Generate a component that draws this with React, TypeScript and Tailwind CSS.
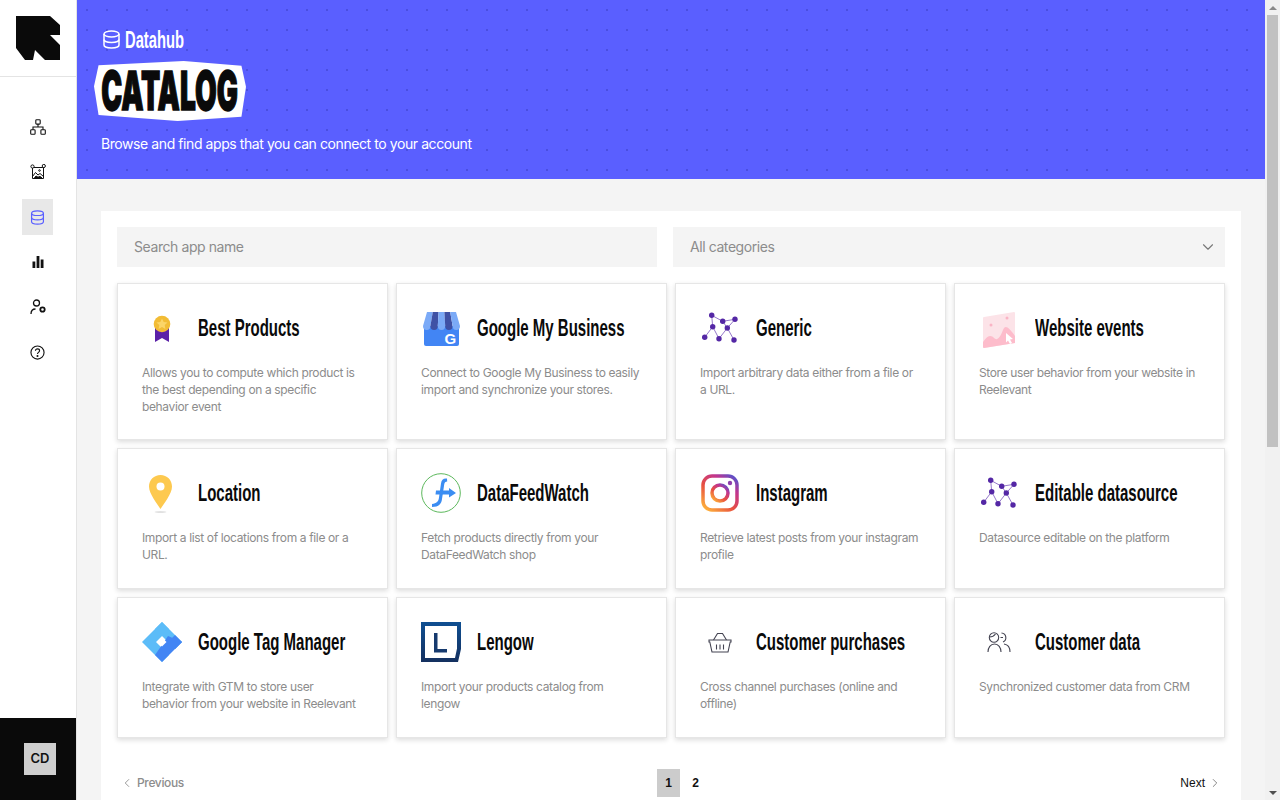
import { ReactNode } from "react";
import { ChevronDown, ChevronLeft, ChevronRight } from "lucide-react";

const body = "font-['Inter','Liberation_Sans',sans-serif]";

function DbIcon({ className }: { className: string }) {
  return (
    <svg viewBox="1.500 0.500 17 19" fill="none" stroke="currentColor" strokeWidth="1.500" className={className}>
      <ellipse cx="10" cy="4.500" rx="7.500" ry="3" />
      <path d="M2.500 4.500v11c0 1.700 3.400 3 7.500 3s7.500-1.300 7.500-3v-11" />
      <path d="M2.500 10c0 1.700 3.400 3 7.500 3s7.500-1.300 7.500-3" />
    </svg>
  );
}

const NavTree = () => (
  <svg viewBox="0 0 16 16" fill="none" stroke="#111" strokeWidth="1.100" className="h-4 w-4">
    <rect x="5.800" y="0.700" width="4.400" height="4.400" rx="0.800" />
    <rect x="0.700" y="10.800" width="4.400" height="4.400" rx="0.800" />
    <rect x="10.900" y="10.800" width="4.400" height="4.400" rx="0.800" />
    <path d="M8 5.100v3M3 10.800V8h10v2.800" />
  </svg>
);

const NavImage = () => (
  <svg viewBox="0 0 16 16" fill="none" stroke="#111" strokeWidth="1" className="h-4 w-4">
    <path d="M2.500 3.500h11v11h-11z" />
    <circle cx="2.500" cy="2.500" r="1.600" fill="#fff" />
    <circle cx="13.800" cy="2" r="1.600" fill="#fff" />
    <circle cx="9.500" cy="6.500" r="0.800" />
    <path d="M2.500 12.500l3-4 2.500 2.500 2-1.500 3.500 3" />
    <path d="M4.500 14l1.500-2 2 1.200 2-.8 2 1.600z" fill="#111" />
  </svg>
);

const NavBars = () => (
  <svg viewBox="0 0 16 16" fill="#111" className="h-4 w-4">
    <rect x="2.500" y="7.500" width="2.800" height="6.500" />
    <rect x="6.600" y="2" width="2.800" height="12" />
    <rect x="10.700" y="5.500" width="2.800" height="8.500" />
  </svg>
);

const NavUser = () => (
  <svg viewBox="0 0 16 16" fill="none" stroke="#111" strokeWidth="1.300" className="h-4 w-4">
    <circle cx="6.500" cy="4" r="3" />
    <path d="M1 15c0-3 1.500-5 4.500-5" />
    <circle cx="12.500" cy="10.500" r="2.200" strokeWidth="1.800" />
  </svg>
);

const NavHelp = () => (
  <svg viewBox="0 0 16 16" fill="none" stroke="#111" strokeWidth="1.200" className="h-[15px] w-[15px]">
    <circle cx="8" cy="8" r="7" />
    <path d="M5.800 6.200c0-1.300 1-2.100 2.200-2.100s2.200.8 2.200 2c0 1.800-2.200 1.700-2.200 3.400" />
    <circle cx="8" cy="11.800" r="0.500" fill="#111" />
  </svg>
);

const Medal = () => (
  <svg viewBox="0 0 40 40" className="h-10 w-10">
    <path d="M13 20h14v14l-7-4-7 4z" fill="#5b21a8" />
    <circle cx="20" cy="16" r="8.300" fill="#f2bc35" />
    <path d="M20 10.500l1.700 3.500 3.800.5-2.800 2.600.7 3.800-3.400-1.800-3.400 1.800.7-3.800-2.800-2.600 3.800-.5z" fill="#fbd568" />
  </svg>
);

const Gmb = () => (
  <svg viewBox="0 0 40 40" className="h-10 w-10">
    <path d="M3 18h35v18a2 2 0 0 1-2 2H5a2 2 0 0 1-2-2z" fill="#4285f4" />
    <path d="M6 4h5.800l-2.400 14a3.700 4 0 0 1-7.400 0z" fill="#7baaf7" />
    <path d="M11.800 4h5.800l-.8 14a3.700 4 0 0 1-7.400 0z" fill="#3f51a5" />
    <path d="M17.600 4h5.800l.8 14a3.700 4 0 0 1-7.400 0z" fill="#7baaf7" />
    <path d="M23.400 4h5.800l2.400 14a3.700 4 0 0 1-7.400 0z" fill="#3f51a5" />
    <path d="M29.200 4H35l4 14a3.700 4 0 0 1-7.400 0z" fill="#7baaf7" />
    <text x="23.500" y="36" fontFamily="Liberation Sans" fontWeight="700" fontSize="15" fill="#fff">G</text>
  </svg>
);

const Graph = () => {
  const pts = [[11.700, 7.300], [22.700, 13.300], [35, 11.300], [12.700, 18.700], [27.300, 20], [4.700, 29.300], [19, 30.700], [34, 32]];
  const links = [[0, 1], [1, 2], [0, 3], [2, 4], [1, 4], [3, 5], [3, 6], [4, 6], [4, 7]];
  return (
    <svg viewBox="0 0 40 40" className="h-10 w-10">
      {links.map(([a, b], i) => (
        <line key={i} x1={pts[a][0]} y1={pts[a][1]} x2={pts[b][0]} y2={pts[b][1]} stroke="#7a55bd" strokeWidth="0.800" />
      ))}
      {pts.map(([x, y], i) => (
        <circle key={i} cx={x} cy={y} r="2.700" fill="#5427a5" />
      ))}
    </svg>
  );
};

const WebEvents = () => (
  <svg viewBox="0 0 40 40" className="h-10 w-10">
    <path d="M5 9l30-5a1 1 0 0 1 1 1v30L5 40a1 1 0 0 1-1-1V10a1 1 0 0 1 1-1z" fill="#fce3e8" />
    <path d="M4 34c5-7 8-7 11-4s6 0 9-8c2-5 5-4 12 6v7L5 40a1 1 0 0 1-1-1z" fill="#fdbccb" />
    <circle cx="12" cy="17" r="1.500" fill="#fab4c5" />
    <circle cx="28" cy="10" r="1.500" fill="#fab4c5" />
    <path d="M27 25l7 6-3 .5 2 3.500-2 1-2-3.500-2 2z" fill="#fff" />
  </svg>
);

const Pin = () => (
  <svg viewBox="0 0 40 40" className="h-10 w-10">
    <ellipse cx="18.500" cy="39" rx="6" ry="0.800" fill="#d8d8d8" />
    <path d="M18.500 2c6.500 0 11.500 5 11.500 11.500C30 21 21.500 31 18.500 36 15.500 31 7 21 7 13.500 7 7 12 2 18.500 2z" fill="#fdc94f" />
    <circle cx="18.500" cy="13.500" r="4" fill="#fff" />
  </svg>
);

const Dfw = () => (
  <svg viewBox="0 0 40 40" className="h-10 w-10">
    <circle cx="20" cy="20" r="19.300" fill="none" stroke="#5cb85c" strokeWidth="1" />
    <path d="M26 5.500c-3.500-.5-5.500 1-6 5l-2 14c-.5 4-2.500 6-7 6.500v3c7 0 9.500-3.500 10-8l2.200-14.500c.3-2 1.200-3 3-3z" fill="#3b8df2" />
    <path d="M15 17.500h13V15l7 5-7 4.500v-3H14.500z" fill="#3b8df2" />
  </svg>
);

const Insta = () => (
  <svg viewBox="0 0 40 40" className="h-10 w-10">
    <defs>
      <linearGradient id="ig" x1="0.100" y1="1" x2="0.900" y2="0">
        <stop offset="0" stopColor="#fdb03c" />
        <stop offset="0.400" stopColor="#e8503f" />
        <stop offset="0.750" stopColor="#c1358f" />
        <stop offset="1" stopColor="#5b51c9" />
      </linearGradient>
    </defs>
    <rect x="3" y="3" width="34" height="34" rx="9" fill="none" stroke="url(#ig)" strokeWidth="3.500" />
    <circle cx="20" cy="20" r="8" fill="none" stroke="url(#ig)" strokeWidth="3.500" />
    <circle cx="30" cy="10" r="2.200" fill="#8e3fae" />
  </svg>
);

const Gtm = () => (
  <svg viewBox="0 0 40 40" className="h-10 w-10">
    <path d="M20 0l7 7-13 13 13 13-7 7L0 20z" fill="#5cbcf8" />
    <path d="M20 0l20 20-7 7L13 7z" fill="#5cbcf8" />
    <path d="M26 14l14 6-20 20-7-7z" fill="#4285f4" />
    <path d="M33 13l7 7-7 7-7-7z" fill="#4285f4" />
    <path d="M20 15.500l4.500 4.500-4.500 4.500-4.500-4.500z" fill="#fff" />
  </svg>
);

const Lengow = () => (
  <svg viewBox="0 0 40 40" className="h-10 w-10">
    <defs>
      <linearGradient id="lg" x1="0.500" y1="0" x2="0.500" y2="1">
        <stop offset="0" stopColor="#0f4f92" />
        <stop offset="1" stopColor="#14305f" />
      </linearGradient>
    </defs>
    <path d="M0 0h40v27l-3 13H0zM4 4v32h30l2-9.500V4z" fill="url(#lg)" fillRule="evenodd" />
    <path d="M13 11h3.500v16H26v3.500H13z" fill="#163a6e" />
  </svg>
);

const Basket = () => (
  <svg viewBox="0 0 40 40" fill="none" stroke="#444452" strokeWidth="1.100" className="h-10 w-10">
    <path d="M13.500 18l4-6.500h5l4 6.500" />
    <path d="M9 18h22v2h-.8L28 30H12L9.800 20H9z" />
    <path d="M16.500 22.500v5M20 22.500v5M23.500 22.500v5" />
  </svg>
);

const People = () => (
  <svg viewBox="0 0 40 40" fill="none" stroke="#444452" strokeWidth="1.100" className="h-10 w-10">
    <circle cx="15" cy="15.500" r="4.700" />
    <path d="M10.500 15c2.500 0 4.500-1 6-3" />
    <path d="M9 30c0-4.500 2.500-8 6.500-8s6.500 3.500 6.500 8" />
    <path d="M22.500 11a4.700 4.700 0 0 1 1.500 9M24 15.500h-2.500" />
    <path d="M25 22c3.500.5 6 3.500 6 8" />
  </svg>
);

type CatalogApp = { title: string; text: string[]; icon: ReactNode };

const apps: CatalogApp[] = [
  { title: "Best Products", icon: <Medal />, text: ["Allows you to compute which product is", "the best depending on a specific", "behavior event"] },
  { title: "Google My Business", icon: <Gmb />, text: ["Connect to Google My Business to easily", "import and synchronize your stores."] },
  { title: "Generic", icon: <Graph />, text: ["Import arbitrary data either from a file or", "a URL."] },
  { title: "Website events", icon: <WebEvents />, text: ["Store user behavior from your website in", "Reelevant"] },
  { title: "Location", icon: <Pin />, text: ["Import a list of locations from a file or a", "URL."] },
  { title: "DataFeedWatch", icon: <Dfw />, text: ["Fetch products directly from your", "DataFeedWatch shop"] },
  { title: "Instagram", icon: <Insta />, text: ["Retrieve latest posts from your instagram", "profile"] },
  { title: "Editable datasource", icon: <Graph />, text: ["Datasource editable on the platform"] },
  { title: "Google Tag Manager", icon: <Gtm />, text: ["Integrate with GTM to store user", "behavior from your website in Reelevant"] },
  { title: "Lengow", icon: <Lengow />, text: ["Import your products catalog from", "lengow"] },
  { title: "Customer purchases", icon: <Basket />, text: ["Cross channel purchases (online and", "offline)"] },
  { title: "Customer data", icon: <People />, text: ["Synchronized customer data from CRM"] },
];

function AppCard({ app }: { app: CatalogApp }) {
  return (
    <div className="border border-[#e6e6e6] bg-white p-6 shadow-[0_2px_5px_rgba(0,0,0,0.14)]">
      <div className="flex h-10 items-center gap-4">
        <div className="h-10 w-10 shrink-0">{app.icon}</div>
        <span className="inline-block origin-left scale-x-[0.625] whitespace-nowrap font-['Liberation_Sans',sans-serif] text-[24px] leading-none font-bold text-[#0a0a0a]">
          {app.title}
        </span>
      </div>
      <p className="mt-4 text-[12px] leading-[17px] tracking-[-0.03em] text-[#8c8c8c]">
        {app.text.map((line) => (
          <span key={line} className="block whitespace-nowrap">
            {line}
          </span>
        ))}
      </p>
    </div>
  );
}

const navItems = [<NavTree />, <NavImage />, <DbIcon className="h-[15px] w-[15px]" />, <NavBars />, <NavUser />, <NavHelp />];

export default function App() {
  return (
    <div className={`flex h-screen overflow-hidden bg-[#f4f4f4] ${body}`}>
      {/* Sidebar */}
      <aside className="flex w-[77px] shrink-0 flex-col border-r border-[#e4e4e4] bg-white">
        <div className="h-[77px] border-b border-[#e4e4e4] p-4">
          <svg viewBox="0 0 44 44" className="h-11 w-11" fill="#0a0a0a">
            <path d="M0 0h34l10 9v10H34l10 10v15H29L19 34l-2 10H9L0 32z" />
          </svg>
        </div>
        <nav className="flex flex-1 flex-col items-center gap-[9px] pt-8 pr-px">
          {navItems.map((icon, i) => (
            <div
              key={i}
              className={`flex h-9 w-[31px] items-center justify-center ${i === 2 ? "bg-[#e8e8e8] text-[#5a5fff]" : ""}`}
            >
              {icon}
            </div>
          ))}
        </nav>
        <div className="flex h-[82px] items-center bg-[#0a0a0a] pl-6">
          <div className="flex h-8 w-8 items-center justify-center bg-[#cfcfcf] text-[13px] font-semibold text-[#111]">CD</div>
        </div>
      </aside>

      <main className="min-w-0 flex-1 overflow-hidden">
        {/* Header */}
        <header className="h-[179px] bg-[#5a5fff] bg-[radial-gradient(circle,#4a4ee0_0.8px,transparent_1.2px)] bg-[size:20px_20px] pt-[30px] pl-6 text-white">
          <div className="flex h-[19px] items-center gap-[5px] pl-0.5">
            <DbIcon className="h-[19px] w-[17px]" />
            <span className="inline-block origin-left scale-x-[0.615] font-['Liberation_Sans',sans-serif] text-[24px] leading-none font-bold">Datahub</span>
          </div>
          <div className="mt-3 -ml-[7px] flex h-[60px] w-[152px] items-center justify-center bg-white [clip-path:polygon(0_42%,3%_7%,59%_0,97%_8%,100%_43%,97%_93%,55%_100%,3%_90%)]">
            <span className="inline-block shrink-0 scale-x-[0.52] font-['Inter',sans-serif] text-[54px] leading-none font-black text-[#0a0a0a] [-webkit-text-stroke:1.500px_#0a0a0a]">CATALOG</span>
          </div>
          <p className="mt-[13px] text-[14px] leading-5 tracking-[-0.03em]">Browse and find apps that you can connect to your account</p>
        </header>

        {/* Catalog */}
        <section className="mx-6 mt-8 bg-white p-4">
          <div className="grid grid-cols-[540px_552px] gap-4">
            <input
              placeholder="Search app name"
              className="h-10 bg-[#f4f4f4] px-[17px] pb-px text-[14px] tracking-[-0.03em] outline-none placeholder:text-[#8c8c8c]"
            />
            <div className="flex h-10 items-center justify-between bg-[#f4f4f4] pr-2 pb-px pl-[17px] text-[14px] tracking-[-0.03em] text-[#8c8c8c]">
              All categories
              <ChevronDown className="h-[18px] w-[18px] text-[#777]" strokeWidth={1.5} />
            </div>
          </div>
          <div className="mt-4 grid grid-cols-4 grid-rows-[157px_141px_141px] gap-2">
            {apps.map((app) => (
              <AppCard key={app.title} app={app} />
            ))}
          </div>
          <div className="mt-[31px] grid h-7 grid-cols-[537px_1fr_auto] items-center px-[3px] text-[12px]">
            <span className="flex items-center gap-[3px] font-medium tracking-[-0.03em] text-[#8c8c8c]">
              <ChevronLeft className="h-[14px] w-[14px]" strokeWidth={1.5} />
              Previous
            </span>
            <div className="flex h-7 items-center font-['Liberation_Sans',sans-serif] font-bold text-[#111]">
              <span className="flex h-7 w-[23px] items-center justify-center bg-[#cccccc]">1</span>
              <span className="flex h-7 w-[31px] items-center justify-center">2</span>
            </div>
            <span className="flex items-center gap-[3px] font-['Liberation_Sans',sans-serif] font-medium text-[#111]">
              Next
              <ChevronRight className="h-[14px] w-[14px] text-[#777]" strokeWidth={1.5} />
            </span>
          </div>
        </section>
      </main>

      {/* Page scrollbar */}
      <div className="flex w-[15px] shrink-0 flex-col items-center bg-[#f1f1f1]">
        <div className="flex h-[15px] items-center justify-center">
          <div className="h-0 w-0 border-x-[4px] border-b-[4px] border-x-transparent border-b-[#8a8a8a]" />
        </div>
        <div className="h-[432px] w-[11px] bg-[#c1c1c1]" />
        <div className="flex-1" />
        <div className="flex h-[15px] items-center justify-center">
          <div className="h-0 w-0 border-x-[4px] border-t-[4px] border-x-transparent border-t-[#505050]" />
        </div>
      </div>
    </div>
  );
}
